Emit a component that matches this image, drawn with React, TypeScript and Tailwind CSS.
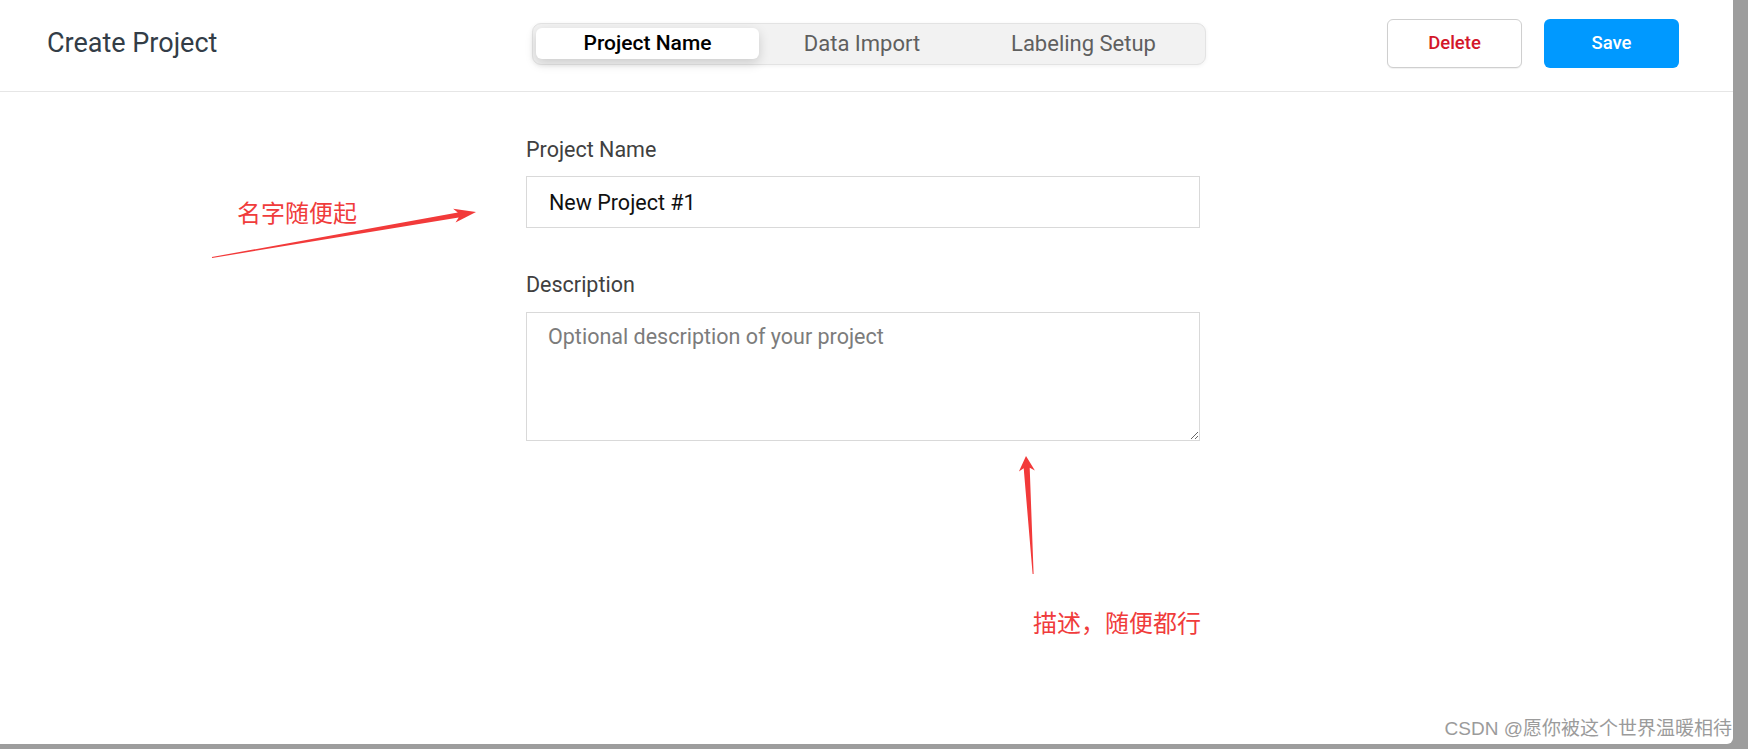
const tabs = [
  { label: 'Project Name', w: 'w-[223px]', active: true },
  { label: 'Data Import', w: 'w-[206px]', active: false },
  { label: 'Labeling Setup', w: 'w-[237px]', active: false },
]

function Arrows() {
  return (
    <svg className="absolute inset-0 pointer-events-none" width="1733" height="744" viewBox="0 0 1733 744">
      {/* 名字 arrow, tail bottom-left, tip at the input */}
      <polygon
        fill="#f23a3a"
        points="476,212 453.1,208.8 457.8,212.6 211.9,257 212.1,258 458.7,217.5 455.5,222.6"
      />
      {/* 描述 arrow, pointing up at the textarea */}
      <polygon
        fill="#f23a3a"
        points="1026,456 1018.9,471.5 1023.7,468.2 1032.6,574 1033.6,574 1029.7,467.8 1034.9,470.5"
      />
    </svg>
  )
}

export default function App() {
  return (
    <div className="w-[1748px] h-[749px] bg-[#9d9d9d] overflow-hidden font-['Roboto',sans-serif]">
      <div className="relative w-[1733px] h-[744px] bg-white rounded-br-[6px] flex flex-col">
        <header className="h-[92px] shrink-0 border-b border-[#e6e6e6] flex items-center pl-[47px] pr-[54px] pb-[4px]">
          <h1 className="w-[485px] text-[27px] leading-none text-[#333d47]">Create Project</h1>

          <div className="w-[674px] h-[42px] flex items-center px-[3px] rounded-[9px] border border-[#e3e3e3] bg-[#f2f2f2] shadow-[0_1px_4px_rgba(0,0,0,0.06)]">
            {tabs.map((t) => (
              <div
                key={t.label}
                className={`${t.w} h-[31px] flex items-center justify-center rounded-[6px] ${
                  t.active
                    ? 'bg-white text-black text-[21px] font-medium shadow-[0_4px_12px_rgba(0,0,0,0.16)]'
                    : 'text-[#5f5f5f] text-[22px]'
                }`}
              >
                {t.label}
              </div>
            ))}
          </div>

          <div className="flex-1 flex justify-end gap-[22px]">
            <button className="w-[135px] h-[49px] rounded-[6px] border border-[#cfcfcf] bg-white text-[#d3172a] text-[18.5px] font-medium shadow-[0_1px_1px_rgba(0,0,0,0.06)]">
              Delete
            </button>
            <button className="w-[135px] h-[49px] rounded-[6px] bg-[#0099ff] text-white text-[18.5px] font-medium">
              Save
            </button>
          </div>
        </header>

        <form className="ml-[526px] mt-[45px] w-[674px] flex flex-col">
          <label className="text-[21.5px] leading-[26px] text-[#404040]">Project Name</label>
          <input
            defaultValue="New Project #1"
            className="mt-[13px] h-[52px] px-[22px] border border-[#d9d9d9] text-[21.5px] text-[#111111] outline-none"
          />

          <label className="mt-[44px] text-[21.5px] leading-[26px] text-[#404040]">Description</label>
          <textarea
            placeholder="Optional description of your project"
            className="mt-[14px] h-[129px] px-[21px] py-[11px] border border-[#d9d9d9] text-[21.5px] leading-[26px] text-[#111111] placeholder:text-[#7c7c7c] outline-none"
          />
        </form>

        <Arrows />

        <span className="absolute left-[237px] top-[200px] text-[24px] leading-[24px] text-[#f03c3c] font-['Noto_Sans_CJK_SC',sans-serif]">
          名字随便起
        </span>
        <span className="absolute left-[1033px] top-[610px] text-[24px] leading-[24px] text-[#f03c3c] font-['Noto_Sans_CJK_SC',sans-serif]">
          描述，随便都行
        </span>

        <span className="absolute right-[1px] bottom-[5px] text-[19px] leading-[20px] text-[#9b9b9b] font-['Liberation_Sans','Noto_Sans_CJK_SC',sans-serif]">
          CSDN @愿你被这个世界温暖相待
        </span>
      </div>
    </div>
  )
}
